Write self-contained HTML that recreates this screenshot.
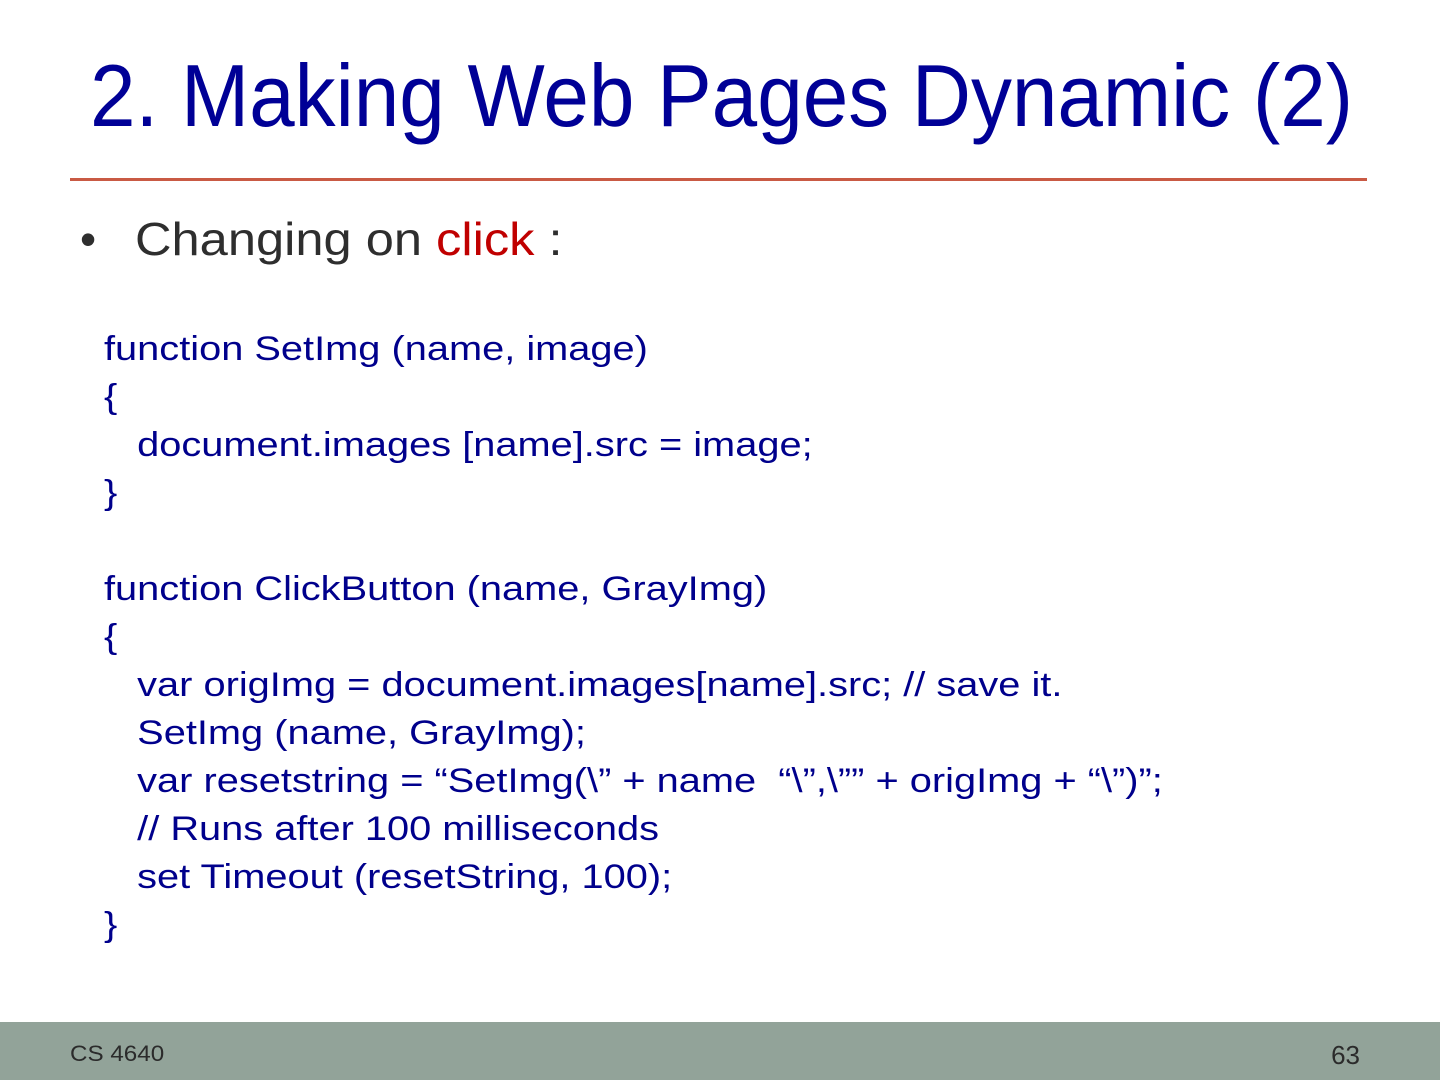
<!DOCTYPE html>
<html><head><meta charset="utf-8"><style>
body{margin:0;width:1440px;height:1080px;position:relative;background:#fff;overflow:hidden;font-family:"Liberation Sans",sans-serif}
.t{position:absolute;left:90px;top:52px;font-size:88px;color:#000096;white-space:nowrap;line-height:1;transform:scaleX(0.93);transform-origin:0 0}
.rule{position:absolute;left:70px;top:178px;width:1297px;height:3px;background:#c95a44}
.b{position:absolute;left:80px;top:216px;font-size:46px;color:#2e2e2e;line-height:1;white-space:nowrap}
.b .d{position:absolute;left:0;top:0}
.b .x{position:absolute;left:55px;top:0;transform:scaleX(1.1);transform-origin:0 0}
.code{position:absolute;left:104px;top:325px;font-size:34px;color:#00008c;line-height:48px;white-space:pre;transform:scaleX(1.17);transform-origin:0 0}
.foot{position:absolute;left:0;top:1022px;width:1440px;height:58px;background:#92a399}
.fl{position:absolute;left:70px;top:1041px;font-size:22px;color:#2b2b2b;transform:scaleX(1.1);transform-origin:0 0}
.fr{position:absolute;right:80px;top:1040px;font-size:26px;color:#2b2b2b}
</style></head><body>
<div class="t">2. Making Web Pages Dynamic (2)</div>
<div class="rule"></div>
<div class="b"><span class="d">•</span><span class="x">Changing on <span style="color:#c00000">click</span> :</span></div>
<div class="code">function SetImg (name, image)
{
   document.images [name].src = image;
}

function ClickButton (name, GrayImg)
{
   var origImg = document.images[name].src; // save it.
   SetImg (name, GrayImg);
   var resetstring = “SetImg(\” + name  “\”,\”” + origImg + “\”)”;
   // Runs after 100 milliseconds
   set Timeout (resetString, 100);
}</div>
<div class="foot"></div>
<div class="fl">CS 4640</div>
<div class="fr">63</div>
</body></html>
